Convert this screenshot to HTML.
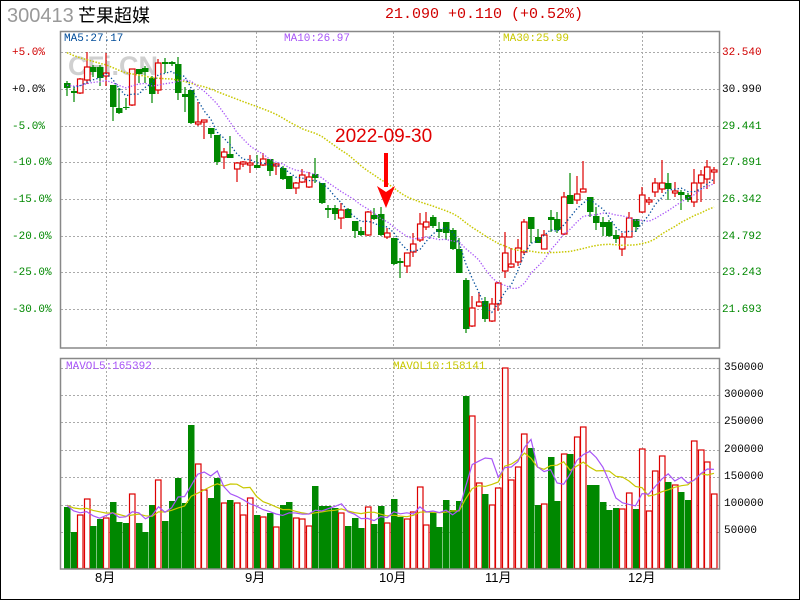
<!DOCTYPE html>
<html><head><meta charset="utf-8"><style>
html,body{margin:0;padding:0;background:#fff}
body{width:800px;height:600px;position:relative;overflow:hidden;font-family:"Liberation Sans","WenQuanYi Zen Hei",sans-serif}
#frame{position:absolute;left:0;top:0;width:798px;height:598px;border:1px solid #000}
.t{position:absolute;white-space:nowrap;font-family:"Liberation Mono","WenQuanYi Zen Hei",monospace;font-size:11px;line-height:11px}
.r{color:#d00000}.g{color:#008800}.k{color:#000}
svg{position:absolute;left:0;top:0}
</style></head><body>
<div id="frame"></div>
<div class="t" style="left:7px;top:5px;font-family:'Liberation Sans',sans-serif;font-size:20px;line-height:22px;color:#999">300413</div>
<div class="t" style="left:78px;top:5px;font-family:'Liberation Sans','WenQuanYi Zen Hei',sans-serif;font-size:18px;line-height:22px;color:#000">芒果超媒</div>
<div class="t r" style="left:385px;top:6px;font-size:15px;line-height:17px">21.090 +0.110 (+0.52%)</div>

<svg width="800" height="600" id="s" xmlns="http://www.w3.org/2000/svg">
<g stroke="#aaa" stroke-dasharray="2,2" stroke-width="1" shape-rendering="crispEdges">
<line x1="61" y1="52.5" x2="719" y2="52.5"/><line x1="61" y1="89.5" x2="719" y2="89.5"/><line x1="61" y1="126.5" x2="719" y2="126.5"/><line x1="61" y1="162.5" x2="719" y2="162.5"/><line x1="61" y1="199.5" x2="719" y2="199.5"/><line x1="61" y1="236.5" x2="719" y2="236.5"/><line x1="61" y1="272.5" x2="719" y2="272.5"/><line x1="61" y1="309.5" x2="719" y2="309.5"/>
<line x1="61" y1="368.5" x2="719" y2="368.5"/><line x1="61" y1="395.5" x2="719" y2="395.5"/><line x1="61" y1="422.5" x2="719" y2="422.5"/><line x1="61" y1="450.5" x2="719" y2="450.5"/><line x1="61" y1="477.5" x2="719" y2="477.5"/><line x1="61" y1="505.5" x2="719" y2="505.5"/><line x1="61" y1="532.5" x2="719" y2="532.5"/>
<line x1="106.5" y1="32" x2="106.5" y2="348"/><line x1="256.5" y1="32" x2="256.5" y2="348"/><line x1="393.5" y1="32" x2="393.5" y2="348"/><line x1="499.5" y1="32" x2="499.5" y2="348"/><line x1="642.5" y1="32" x2="642.5" y2="348"/>
<line x1="106.5" y1="359" x2="106.5" y2="569"/><line x1="256.5" y1="359" x2="256.5" y2="569"/><line x1="393.5" y1="359" x2="393.5" y2="569"/><line x1="499.5" y1="359" x2="499.5" y2="569"/><line x1="642.5" y1="359" x2="642.5" y2="569"/>
</g>
<text x="68" y="75" font-family="Liberation Sans,sans-serif" font-weight="bold" font-size="27" fill="#d0d0d0">CFi.CN</text>
<g id="chart"></g>
<rect x="60.5" y="31.5" width="659" height="316.5" fill="none" stroke="#888" stroke-width="1.5"/>
<rect x="60.5" y="358.5" width="659" height="210.5" fill="none" stroke="#888" stroke-width="1.5"/>
<text x="335" y="142" font-family="Liberation Sans,sans-serif" font-size="19" fill="#e00000">2022-09-30</text>
<rect x="384" y="153" width="4" height="34" fill="#ff0000"/>
<polygon points="377,186 386,192 395,186 386,208" fill="#ff0000"/>
</svg>

<div class="t" style="left:64px;top:34px;color:#004c9a">MA5:27.17</div>
<div class="t" style="left:284px;top:34px;color:#a855f7">MA10:26.97</div>
<div class="t" style="left:503px;top:34px;color:#c8c800">MA30:25.99</div>
<div class="t" style="left:66px;top:362px;color:#a855f7">MAVOL5:165392</div>
<div class="t" style="left:393px;top:362px;color:#c8c800">MAVOL10:158141</div>

<div class="t r" style="left:12px;top:48px">+5.0%</div>
<div class="t k" style="left:12px;top:85px">+0.0%</div>
<div class="t g" style="left:12px;top:122px">-5.0%</div>
<div class="t g" style="left:12px;top:158px">-10.0%</div>
<div class="t g" style="left:12px;top:195px">-15.0%</div>
<div class="t g" style="left:12px;top:232px">-20.0%</div>
<div class="t g" style="left:12px;top:268px">-25.0%</div>
<div class="t g" style="left:12px;top:305px">-30.0%</div>

<div class="t r" style="left:722px;top:48px">32.540</div>
<div class="t k" style="left:722px;top:85px">30.990</div>
<div class="t g" style="left:722px;top:122px">29.441</div>
<div class="t g" style="left:722px;top:158px">27.891</div>
<div class="t g" style="left:722px;top:195px">26.342</div>
<div class="t g" style="left:722px;top:232px">24.792</div>
<div class="t g" style="left:722px;top:268px">23.243</div>
<div class="t g" style="left:722px;top:305px">21.693</div>

<div class="t k" style="left:724px;top:363px">350000</div>
<div class="t k" style="left:724px;top:390px">300000</div>
<div class="t k" style="left:724px;top:417px">250000</div>
<div class="t k" style="left:724px;top:445px">200000</div>
<div class="t k" style="left:724px;top:472px">150000</div>
<div class="t k" style="left:724px;top:499px">100000</div>
<div class="t k" style="left:724px;top:526px">50000</div>

<div class="t k" style="left:95px;top:571px;font-size:13px;line-height:14px;font-family:'Liberation Sans','WenQuanYi Zen Hei',sans-serif">8月</div>
<div class="t k" style="left:245px;top:571px;font-size:13px;line-height:14px;font-family:'Liberation Sans','WenQuanYi Zen Hei',sans-serif">9月</div>
<div class="t k" style="left:379px;top:571px;font-size:13px;line-height:14px;font-family:'Liberation Sans','WenQuanYi Zen Hei',sans-serif">10月</div>
<div class="t k" style="left:485px;top:571px;font-size:13px;line-height:14px;font-family:'Liberation Sans','WenQuanYi Zen Hei',sans-serif">11月</div>
<div class="t k" style="left:628px;top:571px;font-size:13px;line-height:14px;font-family:'Liberation Sans','WenQuanYi Zen Hei',sans-serif">12月</div>

<script>
var C=[
['G',83,88,81,96],['G',91,93,87,102],['R',79,93,78,94],['R',67,80,52,84],['G',67,72,65,77],['G',67,78,65,86],['R',73,76,53,86],['G',85,107,85,121],['G',108,113,88,114],['G',107,108,98,110],
['R',69,105,69,106],['G',69,74,69,83],['G',68,72,66,83],['G',78,94,76,103],['R',63,90,59,94],['G',62,64,58,73],['G',62,64,61,66],['G',64,93,57,100],['G',94,97,87,112],['G',90,123,90,124],
['R',122,124,102,126],['R',120,122,120,139],['G',128,134,128,138],['G',135,162,135,165],['R',152,157,148,169],['G',154,158,136,158],['R',163,169,162,182],['R',162,164,161,167],['R',163,165,155,173],['G',165,168,155,168],
['R',159,165,153,166],['G',159,171,159,176],['R',164,166,163,175],['G',168,179,166,180],['G',176,189,176,189],['R',183,188,182,194],['R',175,182,169,183],['R',177,187,172,188],['G',174,178,158,183],['G',183,203,183,204],
['G',208,210,205,218],['G',208,214,205,220],['R',210,218,203,229],['G',209,218,208,218],['G',221,231,221,238],['G',231,235,227,236],['R',212,235,211,236],['G',215,219,208,220],['G',214,235,207,236],['R',233,237,228,239],
['G',238,264,238,265],['G',261,263,258,278],['R',253,266,253,273],['R',244,252,233,257],['R',224,240,213,242],['R',222,227,212,230],['G',217,226,215,228],['G',229,232,222,238],['G',222,233,222,240],['G',230,249,228,250],
['G',249,273,238,273],['G',280,329,278,333],['R',308,326,296,327],['R',302,306,292,307],['G',301,319,297,322],['R',304,321,298,322],['R',283,304,282,311],['R',253,271,232,278],['R',264,267,248,268],['R',248,262,239,266],
['R',222,252,219,255],['G',217,229,217,243],['G',237,243,229,243],['R',235,249,230,249],['G',217,220,210,232],['G',219,230,212,233],['R',197,234,192,235],['G',195,204,173,204],['R',194,200,176,204],['R',189,192,161,192],
['G',197,212,197,217],['G',216,223,207,230],['G',222,227,217,236],['G',222,236,220,237],['G',235,239,230,243],['R',237,249,233,256],['R',218,237,212,237],['G',219,227,219,232],['R',195,212,187,213],['R',200,202,197,205],
['R',183,192,178,197],['R',183,189,160,193],['G',183,189,173,200],['R',191,193,182,197],['G',192,195,190,210],['G',195,200,193,202],['R',183,202,169,207],['R',175,183,170,202],['R',167,179,160,189],['R',170,172,167,184]];
var V=[507,532,515,499,526,519,518,502,522,523,494,523,532,505,480,521,501,478,503,425,464,490,498,478,503,500,503,515,498,515,517,513,527,505,502,518,519,526,486,506,506,508,513,526,518,528,507,524,506,523,499,517,519,512,487,525,512,527,500,510,501,396,416,483,494,505,488,368,480,467,434,448,505,504,457,501,454,454,437,427,485,485,502,510,508,509,493,509,449,511,471,456,482,485,492,500,441,450,462,494];
var g='',step=6.535;
function X(i){return 64+i*step;}
for(var i=0;i<100;i++){var c=C[i],x=Math.round(X(i)),cx=x+3,col=c[0]=='R'?'#dd0000':'#008800';
g+='<line x1="'+cx+'" y1="'+c[3]+'" x2="'+cx+'" y2="'+c[4]+'" stroke="'+col+'" stroke-width="1.2"/>';
var h=Math.max(c[2]-c[1],1);
if(c[0]=='R')g+='<rect x="'+(x+0.5)+'" y="'+c[1]+'" width="5.5" height="'+h+'" fill="#fff" stroke="#dd0000" stroke-width="1.2"/>';
else g+='<rect x="'+x+'" y="'+c[1]+'" width="6.5" height="'+h+'" fill="#008800"/>';
var v=V[i];
if(c[0]=='R')g+='<rect x="'+(x+0.5)+'" y="'+v+'" width="5.5" height="'+(568.5-v)+'" fill="#fff" stroke="#dd0000" stroke-width="1.2"/>';
else g+='<rect x="'+x+'" y="'+v+'" width="6.5" height="'+(569-v)+'" fill="#008800"/>';
}
var cl=C.map(function(c){return c[0]=='R'?c[1]:c[2];});
var pad=[];for(var k=0;k<30;k++)pad.push(5+k*3.1);
var all=pad.concat(cl);
function ma(arr,n,off,start){var p=[];for(var i=start;i<100;i++){var s=0;for(var j=0;j<n;j++)s+=arr[off+i-j];p.push((X(i)+3).toFixed(1)+','+(s/n).toFixed(1));}return p.join(' ');}
var pad10=[];for(var k=0;k<30;k++)pad10.push(85);var all10=pad10.concat(cl);
g+='<polyline points="'+ma(all,30,30,0)+'" fill="none" stroke="#c8c800" stroke-width="1.5" stroke-dasharray="1.5,1.5"/>';
g+='<polyline points="'+ma(all10,10,30,0)+'" fill="none" stroke="#a855f7" stroke-width="1.3" stroke-dasharray="1.3,1.7"/>';
g+='<polyline points="'+ma(all10,5,30,1)+'" fill="none" stroke="#004c9a" stroke-width="1.3" stroke-dasharray="1.3,2.2"/>';
var vp=[];for(var k=0;k<30;k++)vp.push(505);var va=vp.concat(V);
g+='<polyline points="'+ma(va,10,30,0)+'" fill="none" stroke="#c8c800" stroke-width="1.2"/>';
g+='<polyline points="'+ma(va,5,30,0)+'" fill="none" stroke="#a855f7" stroke-width="1.2"/>';
document.getElementById('chart').innerHTML=g;
</script>
</body></html>
